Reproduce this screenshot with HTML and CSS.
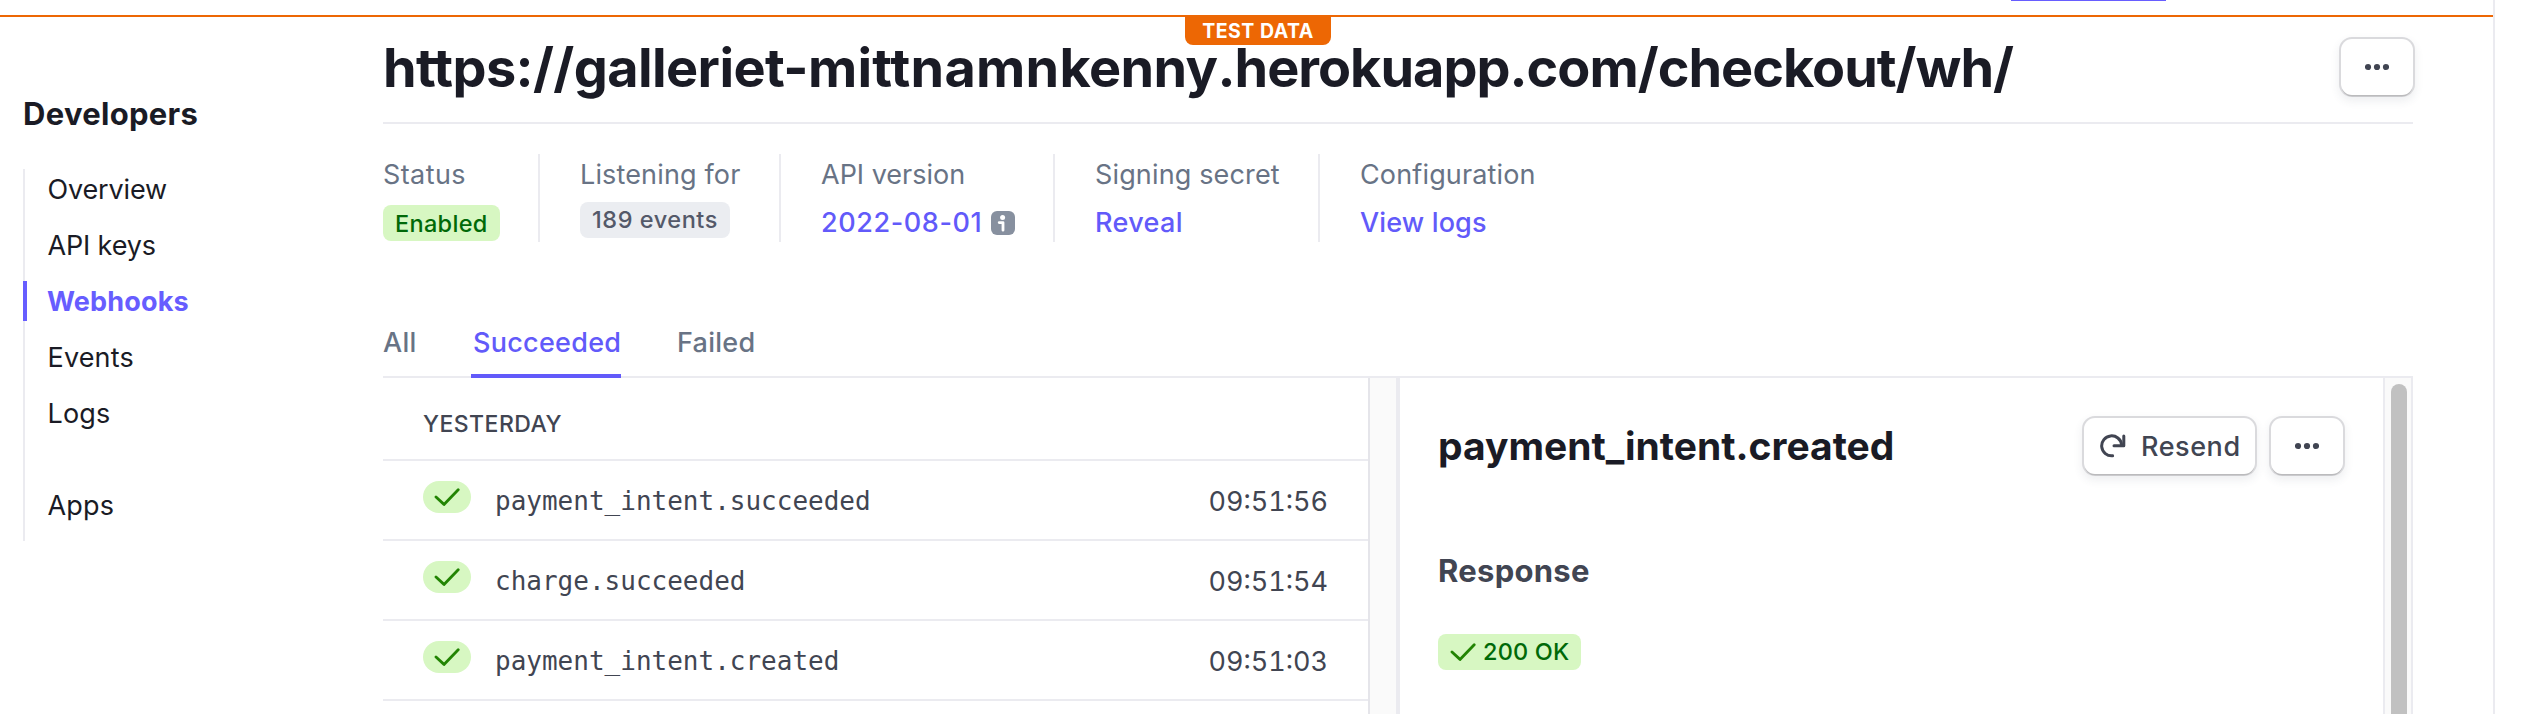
FILE: index.html
```
<!DOCTYPE html>
<html lang="en">
<head>
<meta charset="utf-8">
<title>Webhooks</title>
<link rel="stylesheet" href="styles.css">
</head>
<body>
<div class="app">
  <header class="topbar">
    <div class="topbar-active"></div>
    <span class="test-badge">TEST DATA</span>
  </header>
  <div class="layout">
    <aside class="sidebar">
      <h2 class="sidebar-title">Developers</h2>
      <nav class="nav">
        <a class="nav-item tight">Overview</a>
        <a class="nav-item tight">API keys</a>
        <a class="nav-item active">Webhooks</a>
        <a class="nav-item">Events</a>
        <a class="nav-item">Logs</a>
        <a class="nav-item apps">Apps</a>
      </nav>
    </aside>
    <main class="main">
      <div class="page-head">
        <h1 class="page-title">https://galleriet-<span class="url-name">mittnamn</span>kenny<span class="url-rest">.herokuapp.com/checkout/wh/</span></h1>
        <button class="btn btn-more" aria-label="More">
          <svg width="24" height="8" viewBox="0 0 24 8"><circle cx="3" cy="4" r="3.1"/><circle cx="12" cy="4" r="3.1"/><circle cx="21" cy="4" r="3.1"/></svg>
        </button>
      </div>
      <div class="meta">
        <div class="meta-col status">
          <div class="label">Status</div>
          <span class="badge green enabled">Enabled</span>
        </div>
        <div class="meta-col events">
          <div class="label">Listening for</div>
          <span class="badge gray">189 events</span>
        </div>
        <div class="meta-col version">
          <div class="label">API version</div>
          <div class="value"><a class="date">2022-08-01</a>
            <svg class="info" width="24" height="24" viewBox="0 0 24 24"><rect width="24" height="24" rx="6" fill="#87909f"/><circle cx="11.6" cy="6.4" r="2.5" fill="#fff"/><path d="M8.2 11.6h3.8v7.6" fill="none" stroke="#fff" stroke-width="2.8" stroke-linecap="round" stroke-linejoin="round"/></svg>
          </div>
        </div>
        <div class="meta-col secret">
          <div class="label">Signing secret</div>
          <div class="value"><a class="reveal">Reveal</a></div>
        </div>
        <div class="meta-col config">
          <div class="label">Configuration</div>
          <div class="value"><a>View logs</a></div>
        </div>
      </div>
      <div class="tabs">
        <a class="tab all">All</a>
        <a class="tab selected">Succeeded</a>
        <a class="tab">Failed</a>
      </div>
      <div class="panels">
        <section class="list">
          <div class="group">YESTERDAY</div>
          <div class="row">
            <span class="pill"><svg width="26" height="18" viewBox="0 0 26 18"><path d="M2 9l8 7.4L24.2 1.8"/></svg></span>
            <span class="event">payment_intent.succeeded</span>
            <span class="time">09:51:56</span>
          </div>
          <div class="row">
            <span class="pill"><svg width="26" height="18" viewBox="0 0 26 18"><path d="M2 9l8 7.4L24.2 1.8"/></svg></span>
            <span class="event">charge.succeeded</span>
            <span class="time">09:51:54</span>
          </div>
          <div class="row">
            <span class="pill"><svg width="26" height="18" viewBox="0 0 26 18"><path d="M2 9l8 7.4L24.2 1.8"/></svg></span>
            <span class="event">payment_intent.created</span>
            <span class="time">09:51:03</span>
          </div>
        </section>
        <div class="gutter"></div>
        <section class="detail">
          <div class="detail-head">
            <h2 class="detail-title">payment_intent.created</h2>
            <button class="btn btn-resend">
              <svg class="resend-icon" width="26" height="24" viewBox="0 0 26 24"><path d="M12.6 21.8A10 10 0 1 1 21.6 10.6"/><path d="M23.8 2v9.8H14"/></svg>
              <span class="resend-text">Resend</span>
            </button>
            <button class="btn btn-more" aria-label="More">
              <svg width="24" height="8" viewBox="0 0 24 8"><circle cx="3" cy="4" r="3.1"/><circle cx="12" cy="4" r="3.1"/><circle cx="21" cy="4" r="3.1"/></svg>
            </button>
          </div>
          <h3 class="response">Response</h3>
          <span class="badge green code"><svg class="code-check" width="26" height="18" viewBox="0 0 26 18"><path d="M2 9l8 7.4L24.2 1.8"/></svg>200 OK</span>
        </section>
        <div class="scrollbar"><div class="thumb"></div></div>
      </div>
    </main>
  </div>
</div>
</body>
</html>
```
FILE: styles.css
```
* { box-sizing: border-box; }

body {
  margin: 0;
  background: #fff;
  font-family: Inter, "Liberation Sans", sans-serif;
  font-size: 27px;
  line-height: 36px;
  color: #1a1b25;
}

h1, h2, h3 { margin: 0; font-weight: 700; }

.app {
  width: 2495px;
  height: 714px;
  overflow: hidden;
  border-right: 2px solid #ebebf0;
}

.topbar {
  position: relative;
  display: flex;
  justify-content: flex-end;
  height: 17px;
  padding-right: 327px;
  border-bottom: 2px solid #ed6704;
}
.topbar-active { width: 155px; height: 1px; background: #675dff; }
.test-badge {
  position: absolute;
  left: 1185px;
  top: 15px;
  width: 146px;
  height: 30px;
  padding-top: 3px;
  border-radius: 0 0 8px 8px;
  background: #ed6704;
  color: #fff;
  font-size: 19.5px;
  font-weight: 700;
  line-height: 27px;
  letter-spacing: 0.5px;
  text-align: center;
}

.layout { display: flex; }

.sidebar { width: 383px; padding: 77px 0 0 23px; }
.sidebar-title {
  font-size: 31px;
  line-height: 40px;
  letter-spacing: 0.3px;
}
.nav {
  display: flex;
  flex-direction: column;
  gap: 16px;
  margin-top: 35px;
  padding-bottom: 16px;
  border-left: 2px solid #ebebf0;
}
.nav-item { height: 40px; padding-left: 22.5px; line-height: 42px; letter-spacing: 0.15px; }
.tight { letter-spacing: -0.15px; }
.active {
  margin-left: -2px;
  padding-left: 20px;
  border-left: 4px solid #675dff;
  color: #675dff;
  font-weight: 700;
  letter-spacing: 0.18px;
}
.apps { margin-top: 36px; }

.main { width: 2030px; }
.page-head {
  display: flex;
  justify-content: space-between;
  align-items: flex-start;
  height: 107px;
  padding-top: 21px;
  border-bottom: 2px solid #ebebf0;
}
.page-title {
  font-size: 54px;
  line-height: 59px;
  letter-spacing: -0.6px;
  white-space: nowrap;
}
.url-name { letter-spacing: 0.25px; }
.url-rest { letter-spacing: -1px; }

.btn {
  display: flex;
  align-items: center;
  height: 56px;
  padding: 0;
  border: 0;
  border-radius: 11px;
  background: #fff;
  color: #414552;
  font: 500 27px/36px Inter, "Liberation Sans", sans-serif;
  letter-spacing: 0.55px;
  box-shadow: 0 2px 0 -0.5px rgba(0, 0, 0, 0.14), 0 0 0 2px #dadadd, 0 4px 10px 2px rgba(60, 66, 87, 0.09);
}
.btn-more { justify-content: center; width: 72px; fill: #414552; }
.page-head .btn { margin-top: 1px; }
.btn-resend { width: 171px; padding-left: 16px; gap: 15px; }
.resend-text { padding-top: 1px; }
.resend-icon {
  fill: none;
  stroke: #414552;
  stroke-width: 3;
  stroke-linecap: round;
  stroke-linejoin: round;
}

.meta { display: flex; height: 88px; margin-top: 30px; }
.meta-col {
  padding: 3px 0 0 40px;
  border-right: 2px solid #ebebf0;
}
.status { width: 157px; padding-left: 0; }
.events { width: 241px; }
.version { width: 274px; }
.secret { width: 265px; }
.config { border-right: 0; }
.label { margin-bottom: 9px; color: #687385; letter-spacing: 0.15px; }
.status .label { letter-spacing: 0.4px; }
.version .label { letter-spacing: 0; }
.value {
  display: flex;
  align-items: center;
  gap: 9px;
  margin-top: 12px;
  color: #625afa;
  font-weight: 500;
  letter-spacing: 0.15px;
}
.info { margin-top: -1px; }
.date { letter-spacing: 0.59px; }
.reveal { letter-spacing: 0.35px; }

.badge {
  display: flex;
  align-items: center;
  width: max-content;
  height: 36px;
  padding: 0 12px;
  border-radius: 8px;
  font-size: 23.5px;
  font-weight: 500;
  white-space: nowrap;
}
.green { background: #d7f7c2; color: #006908; }
.gray { width: 150px; background: #ebedf1; color: #545969; letter-spacing: 0.55px; }
.enabled { width: 117px; margin-top: 12px; padding-top: 1px; letter-spacing: 0.32px; }

.tabs {
  display: flex;
  gap: 54px;
  height: 54px;
  margin-top: 82px;
  border-bottom: 2px solid #ebebf0;
}
.tab {
  height: 54px;
  padding: 1px 2px 0;
  color: #687385;
  font-weight: 500;
  letter-spacing: 0.27px;
}
.all { width: 34px; padding: 1px 0 0; }
.selected { width: 150px; border-bottom: 4px solid #625afa; color: #625afa; }

.panels { display: flex; height: 336px; overflow: hidden; }
.list { width: 987px; border-right: 2px solid #e5e5ea; }
.group {
  height: 83px;
  padding: 34px 0 0 40px;
  border-bottom: 2px solid #ebebf0;
  color: #414552;
  font-size: 23px;
  font-weight: 500;
  line-height: 25px;
  letter-spacing: 0.45px;
}
.row {
  display: flex;
  height: 80px;
  padding: 20px 40px 0;
  border-bottom: 2px solid #ebebf0;
  color: #414552;
  line-height: 40px;
}
.pill {
  display: flex;
  align-items: center;
  justify-content: center;
  width: 48px;
  height: 32px;
  margin-right: 24px;
  border-radius: 16px;
  background: #d7f7c2;
}
.pill svg, .code-check {
  fill: none;
  stroke: #228403;
  stroke-width: 2.8;
  stroke-linecap: round;
  stroke-linejoin: round;
}
.event { flex: 1; font-family: "DejaVu Sans Mono", monospace; font-size: 26px; }
.time { padding-top: 1px; font-variant-numeric: tabular-nums; }

.gutter { width: 30px; border-right: 4px solid #ebebf0; background: #fafafa; }

.detail { width: 983px; padding: 40px 40px 0 38px; }
.detail-head { display: flex; gap: 16px; }
.detail-title { flex: 1; font-size: 39px; line-height: 56px; }
.response {
  margin: 77px 0 43px;
  color: #414552;
  font-size: 31px;
  line-height: 40px;
  letter-spacing: 0.28px;
}
.code { width: 143px; padding-right: 0; letter-spacing: 0.18px; }
.code-check { flex: none; margin-right: 7px; }

.scrollbar {
  width: 30px;
  padding: 6px 0 0 6px;
  border: solid #ebebf0;
  border-width: 0 2px;
  background: #fafafa;
}
.thumb { width: 16px; height: 400px; border-radius: 8px; background: #c1c1c1; }
```
